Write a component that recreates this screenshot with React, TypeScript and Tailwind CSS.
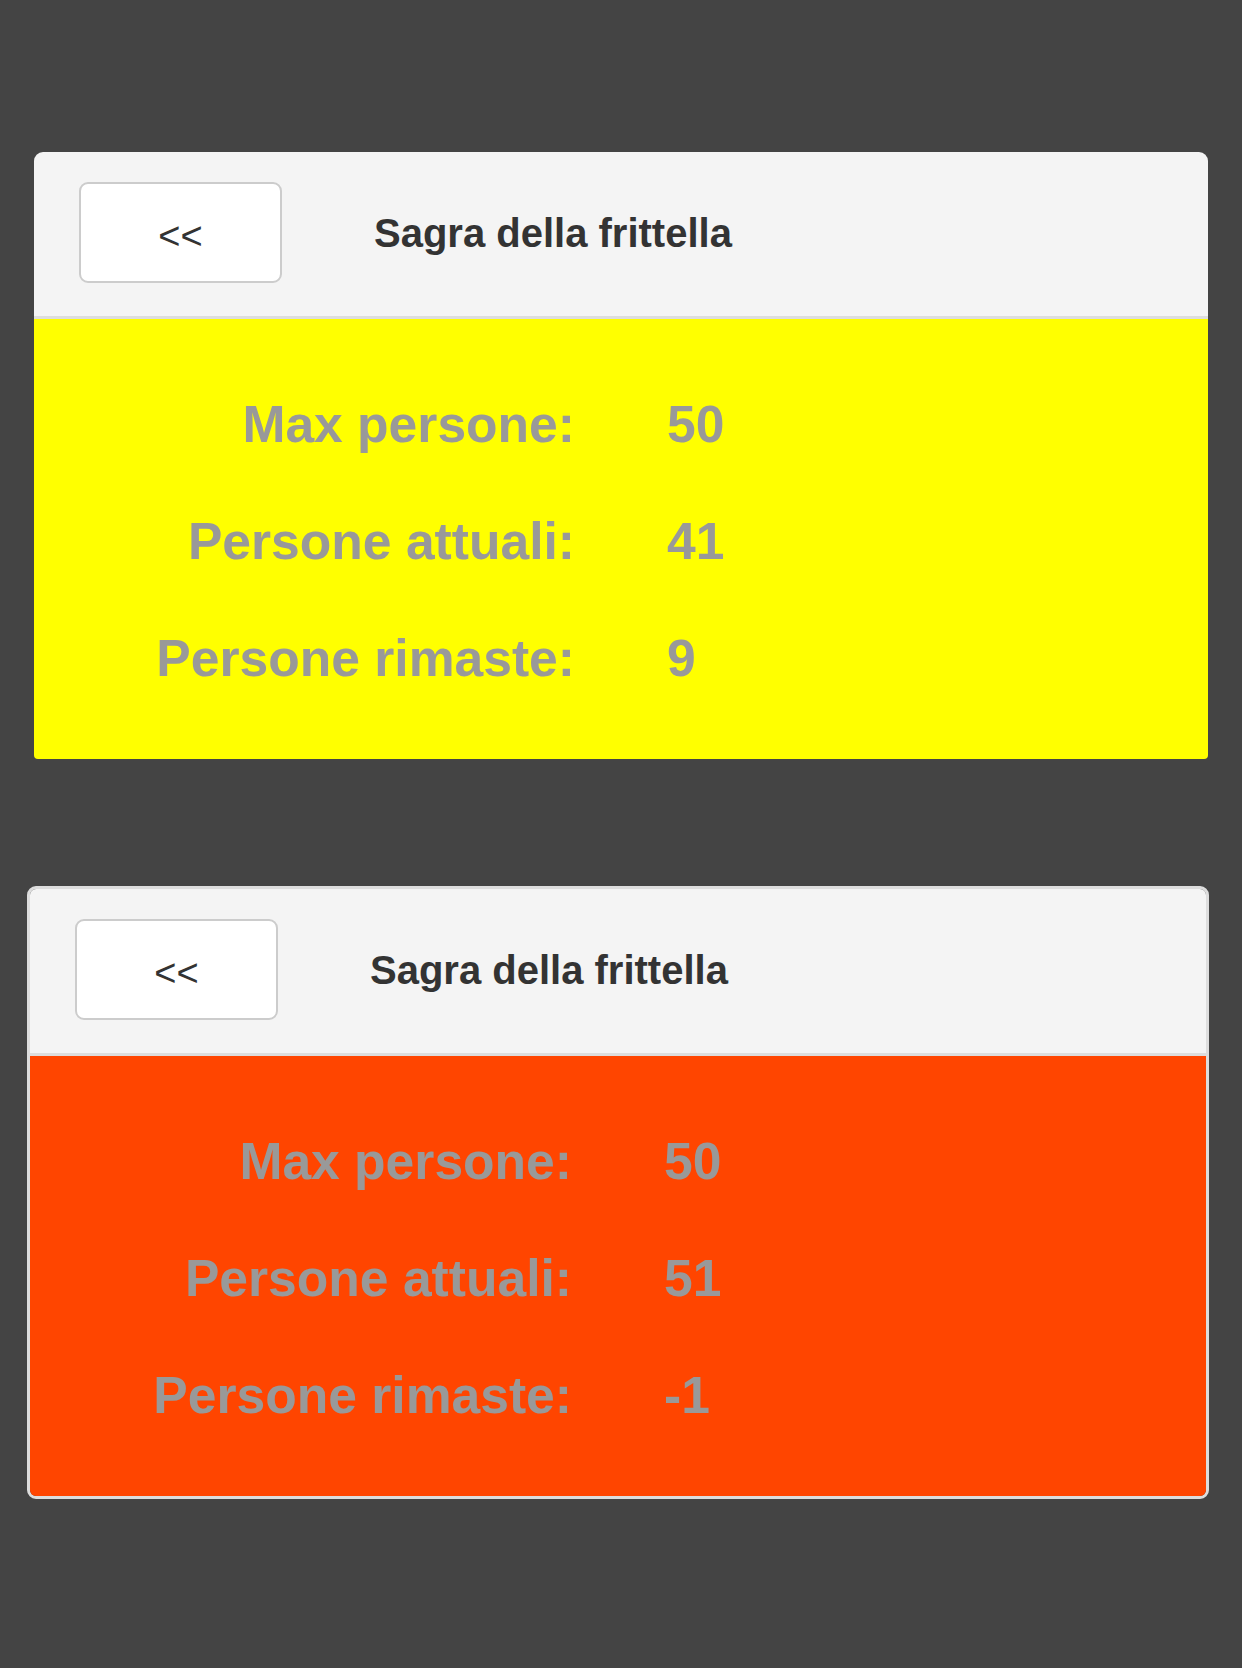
import { FC } from "react";

type Stat = { label: string; value: string };

type CardProps = {
    title: string;
    stats: Stat[];
    bodyColor: string;
    framed?: boolean;
};

const font = "font-['Liberation_Sans',Arial,sans-serif]";

const EventCard: FC<CardProps> = ({ title, stats, bodyColor, framed }) => {
    const outer = framed
        ? "ml-[27px] w-[1182px] border-[3px] border-[#dddddd] rounded-[9px] overflow-hidden"
        : "ml-[34px] w-[1174px] rounded-t-[9px] rounded-b-[4px] overflow-hidden";

    return <div className={outer}>
        <div className="h-[167px] bg-[#f4f4f4] border-b-[3px] border-[#dddddd] flex items-center pb-[3px]">
            <button className={`ml-[45px] w-[203px] h-[101px] bg-white border-2 border-[#cccccc] rounded-[9px] text-[38px] text-[#333333] leading-none pt-[6px] ${font}`}>
                &lt;&lt;
            </button>
            <h1 className={`ml-[92px] text-[40px] font-bold text-[#333333] leading-none ${font}`}>{title}</h1>
        </div>
        <div className={`${bodyColor} pt-[47px] pb-[42px] grid grid-cols-2 ${font}`}>
            {stats.map(stat => (
                <div key={stat.label} className="contents">
                    <div className="text-right pr-[46px] text-[51.6px] font-bold leading-[117px] text-[#999999]">{stat.label}</div>
                    <div className="pl-[46px] text-[51.6px] font-bold leading-[117px] text-[#999999]">{stat.value}</div>
                </div>
            ))}
        </div>
    </div>
}

const App: FC = () => {
    return <div className="min-h-screen w-full bg-[#444444] pt-[152px] pb-[167px] flex flex-col gap-[127px]">
        <EventCard
            title="Sagra della frittella"
            bodyColor="bg-[#ffff00]"
            stats={[
                { label: "Max persone:", value: "50" },
                { label: "Persone attuali:", value: "41" },
                { label: "Persone rimaste:", value: "9" },
            ]}
        />
        <EventCard
            framed
            title="Sagra della frittella"
            bodyColor="bg-[#ff4500]"
            stats={[
                { label: "Max persone:", value: "50" },
                { label: "Persone attuali:", value: "51" },
                { label: "Persone rimaste:", value: "-1" },
            ]}
        />
    </div>
}

export default App;
